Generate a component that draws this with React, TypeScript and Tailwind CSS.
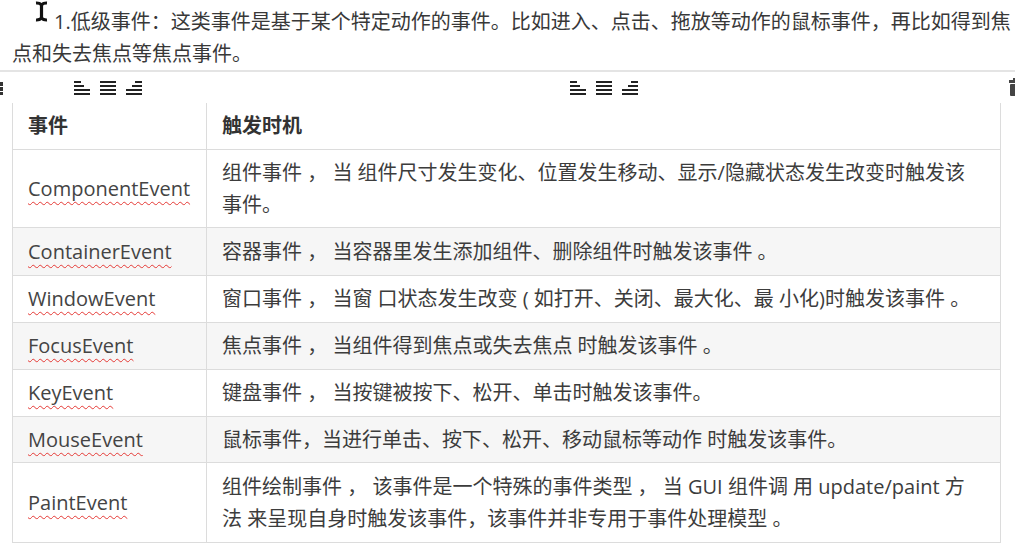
const rows = [
  { name: "ComponentEvent", h: "h-[78px]", bg: "bg-white", lines: ["组件事件 ， 当 组件尺寸发生变化、位置发生移动、显示/隐藏状态发生改变时触发该", "事件。"] },
  { name: "ContainerEvent", h: "h-[48px]", bg: "bg-[#f6f6f6]", lines: ["容器事件 ， 当容器里发生添加组件、删除组件时触发该事件 。"] },
  { name: "WindowEvent", h: "h-[47px]", bg: "bg-white", lines: ["窗口事件 ， 当窗 口状态发生改变 ( 如打开、关闭、最大化、最 小化)时触发该事件 。"] },
  { name: "FocusEvent", h: "h-[47px]", bg: "bg-[#f6f6f6]", lines: ["焦点事件 ， 当组件得到焦点或失去焦点 时触发该事件 。"] },
  { name: "KeyEvent", h: "h-[47px]", bg: "bg-white", lines: ["键盘事件 ， 当按键被按下、松开、单击时触发该事件。"] },
  { name: "MouseEvent", h: "h-[46px]", bg: "bg-[#f6f6f6]", lines: ["鼠标事件，当进行单击、按下、松开、移动鼠标等动作 时触发该事件。"] },
  { name: "PaintEvent", h: "h-[79px]", bg: "bg-white", lines: ["组件绘制事件 ， 该事件是一个特殊的事件类型 ， 当 GUI 组件调 用 update/paint 方", "法 来呈现自身时触发该事件，该事件并非专用于事件处理模型 。"] },
];

function AlignIcon({ widths, right }: { widths: number[]; right?: boolean }) {
  return (
    <svg width="16" height="14" viewBox="0 0 16 14">
      {widths.map((w, i) => (
        <rect key={i} x={right ? 16 - w : 0} y={i * 4} width={w} height="2" fill="#222" />
      ))}
    </svg>
  );
}

function AlignGroup() {
  return (
    <div className="flex items-center gap-[10px]">
      <AlignIcon widths={[7, 10, 16, 16]} />
      <AlignIcon widths={[16, 16, 16, 16]} />
      <AlignIcon widths={[7, 10, 16, 16]} right />
    </div>
  );
}

export default function App() {
  return (
    <div
      className="relative h-[549px] w-[1015px] overflow-hidden bg-white text-[#333]"
      style={{ fontFamily: "'Open Sans', 'Noto Sans CJK SC', sans-serif" }}
    >
      {/* text cursor */}
      <svg className="absolute left-[35px] top-[1px]" width="13" height="21" viewBox="0 0 13 21">
        <path d="M1 2 Q4.5 1.8 6.5 3.8 Q8.5 1.8 12 2 M6.5 3.8 V17.2 M1 19 Q4.5 19.2 6.5 17.2 Q8.5 19.2 12 19" stroke="#111" strokeWidth="3.2" fill="none" />
      </svg>

      <p className="h-[70px] pl-[12px] pt-[6px] text-[20px] leading-[32px] indent-[42px] whitespace-nowrap text-[#383838]">
        1.低级事件：这类事件是基于某个特定动作的事件。比如进入、点击、拖放等动作的鼠标事件，再比如得到焦
        <br />
        点和失去焦点等焦点事件。
      </p>
      <div className="h-[2px] bg-[#e4e4e4]" />

      {/* toolbar */}
      <div className="relative h-[31px]">
        <div className="ml-[12px] grid h-full w-[989px] grid-cols-[195px_1fr]">
          <div className="flex items-center justify-center pr-[3px]">
            <AlignGroup />
          </div>
          <div className="flex items-center justify-center">
            <AlignGroup />
          </div>
        </div>
        <svg className="absolute left-0 top-[10px]" width="4" height="14" viewBox="0 0 4 14">
          <rect x="0" y="0" width="3" height="4" fill="#333" />
          <rect x="0" y="5" width="3" height="4" fill="#333" />
          <rect x="0" y="10" width="3" height="3" fill="#333" />
        </svg>
        <svg className="absolute left-[1009px] top-[6px]" width="14" height="18" viewBox="0 0 14 18">
          <rect x="4" y="0" width="6" height="3" fill="#444" />
          <rect x="0" y="2" width="14" height="3" fill="#444" />
          <rect x="1" y="6" width="12" height="12" rx="1" fill="#444" />
        </svg>
      </div>

      {/* table */}
      <div className="ml-[12px] w-[989px] border-x border-b border-[#dcdcdc]">
        <div className="grid h-[47px] grid-cols-[194px_1fr] border-b border-[#dcdcdc] bg-white text-[20px] font-bold text-[#333]">
          <div className="flex items-center border-r border-[#dcdcdc] pl-[15px]">事件</div>
          <div className="flex items-center pl-[15px]">触发时机</div>
        </div>
        {rows.map((r, idx) => (
          <div
            key={r.name}
            className={`grid grid-cols-[194px_1fr] ${r.h} ${r.bg} ${idx < rows.length - 1 ? "border-b border-[#dcdcdc]" : ""}`}
          >
            <div className="flex items-center border-r border-[#dcdcdc] pl-[15px] text-[20px] text-[#444]">
              <span className="underline decoration-[#e53935] decoration-wavy decoration-1 underline-offset-[5px]">
                {r.name}
              </span>
            </div>
            <div className="flex flex-col justify-center whitespace-nowrap pl-[15px] text-[20px] leading-[32px] text-[#3c3c3c]">
              {r.lines.map((l) => (
                <div key={l}>{l}</div>
              ))}
            </div>
          </div>
        ))}
      </div>
    </div>
  );
}
